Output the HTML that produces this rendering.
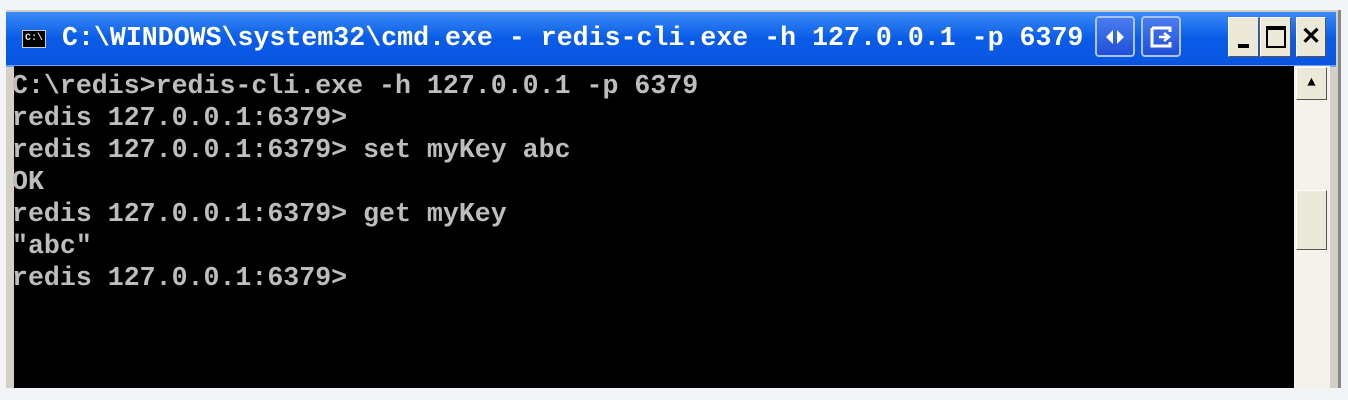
<!DOCTYPE html><html><head><style>
body{margin:0;width:1348px;height:400px;background:#f2f4f8;position:relative;overflow:hidden;font-family:"Liberation Mono",monospace}
.a{position:absolute}
.t{font-weight:bold;font-size:26.6px;white-space:pre;line-height:32px}
.b{background:#ece9d8;border:1px solid #fff;border-right-color:#555;border-bottom-color:#555;box-sizing:border-box}
.ib{background:linear-gradient(#4a7cf0,#1f4fd8);border:2px solid #a8c4f8;border-radius:4px;box-sizing:border-box}
</style></head><body>
<div class="a" style="left:6px;top:10px;width:1332px;height:378px;background:#d4d0c8;border-right:3px solid #888"></div>
<div class="a" style="left:6px;top:12px;width:1330px;height:53px;background:linear-gradient(#3a8af5,#0a5ce8 50%,#0a55e0);border-bottom:2px solid #6aa3f5"></div>
<div class="a" style="left:22px;top:30px;width:22px;height:16px;background:#000;border:1px solid #ccc;color:#ddd;font-size:10px;line-height:16px;text-align:center;font-weight:bold">C:\</div>
<div class="a t" style="left:62px;top:22px;color:#fff">C:\WINDOWS\system32\cmd.exe - redis-cli.exe -h 127.0.0.1 -p 6379</div>
<div class="a ib" style="left:1095px;top:16px;width:40px;height:41px"><svg class="a" style="left:6px;top:8px" width="24" height="22"><path d="M3 11l7-7v14zM21 11l-7-7v14z" fill="#fff"/></svg></div>
<div class="a ib" style="left:1141px;top:16px;width:40px;height:41px"><svg class="a" style="left:6px;top:7px" width="26" height="24"><path d="M3 3h18v4M3 3v18h18v-4" stroke="#fff" stroke-width="3" fill="none"/><path d="M10 12h8M15 8l5 4-5 4" stroke="#fff" stroke-width="2.5" fill="none"/></svg></div>
<div class="a b" style="left:1228px;top:17px;width:31px;height:40px"><div class="a" style="left:9px;top:26px;width:11px;height:4px;background:#000"></div></div>
<div class="a b" style="left:1260px;top:17px;width:31px;height:40px"><div class="a" style="left:5px;top:8px;width:16px;height:16px;border:2px solid #000;border-top-width:4px"></div></div>
<div class="a b" style="left:1296px;top:17px;width:30px;height:40px;font:bold 24px 'Liberation Sans';text-align:center;line-height:38px">✕</div>
<div class="a" style="left:14px;top:66px;width:1280px;height:322px;background:#000"></div>
<div class="a" style="left:1294px;top:66px;width:36px;height:322px;background:#f4f2ea"></div>
<div class="a b" style="left:1296px;top:67px;width:31px;height:33px;font-size:14px;text-align:center;line-height:30px">▲</div>
<div class="a b" style="left:1296px;top:190px;width:31px;height:60px"></div>
<div class="a t" style="left:12px;top:70px;color:#bdbdbd">C:\redis>redis-cli.exe -h 127.0.0.1 -p 6379
redis 127.0.0.1:6379>
redis 127.0.0.1:6379> set myKey abc
OK
redis 127.0.0.1:6379> get myKey
"abc"
redis 127.0.0.1:6379></div>
</body></html>
